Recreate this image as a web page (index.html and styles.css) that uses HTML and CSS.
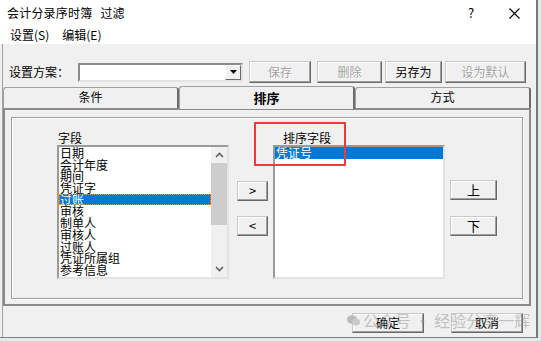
FILE: index.html
```html
<!doctype html>
<html>
  <head>
    <meta charset="utf-8">
    <title>会计分录序时簿 过滤</title>
    <link rel="stylesheet" href="styles.css">
  </head>
  <body>
    <div class="window">
      <div class="titlebar">
        <span class="title">会计分录序时簿<span class="sub">过滤</span></span>
        <span class="help">?</span>
        <span class="close">
          <svg width="11" height="11" viewBox="0 0 11 11"><path d="M0.5 0.5L10.5 10.5M10.5 0.5L0.5 10.5" stroke="#000" stroke-width="1.1" fill="none"/></svg>
        </span>
      </div>
      <div class="menubar">
        <span>设置(S)</span>
        <span>编辑(E)</span>
      </div>

      <div class="client">
        <div class="toolbar">
          <span class="scheme-label">设置方案：</span>
          <div class="combo">
            <div class="combo-btn">
              <svg width="7" height="4" viewBox="0 0 7 4"><path d="M0 0H7L3.5 4Z" fill="#000"/></svg>
            </div>
          </div>
          <button class="btn tb-save disabled">保存</button>
          <button class="btn tb-del disabled">删除</button>
          <button class="btn tb-saveas">另存为</button>
          <button class="btn tb-default disabled">设为默认</button>
        </div>

        <div class="tabs">
          <div class="tab">条件</div>
          <div class="tab active">排序</div>
          <div class="tab">方式</div>
        </div>

        <div class="panel">
          <div class="group">
            <div class="col">
              <div class="cap">字段</div>
              <div class="listbox">
                <ul class="items">
                  <li>日期</li>
                  <li>会计年度</li>
                  <li>期间</li>
                  <li>凭证字</li>
                  <li class="sel focus">过账</li>
                  <li>审核</li>
                  <li>制单人</li>
                  <li>审核人</li>
                  <li>过账人</li>
                  <li>凭证所属组</li>
                  <li>参考信息</li>
                </ul>
                <div class="scrollbar">
                  <div class="arrow">
                    <svg width="9" height="6" viewBox="0 0 9 6"><path d="M1 5L4.5 1.5L8 5" stroke="#606060" stroke-width="1.6" fill="none"/></svg>
                  </div>
                  <div class="track"><div class="thumb"></div></div>
                  <div class="arrow">
                    <svg width="9" height="6" viewBox="0 0 9 6"><path d="M1 1L4.5 4.5L8 1" stroke="#606060" stroke-width="1.6" fill="none"/></svg>
                  </div>
                </div>
              </div>
            </div>

            <div class="move-btns">
              <button class="btn">&gt;</button>
              <button class="btn">&lt;</button>
            </div>

            <div class="col sort-col">
              <div class="cap">排序字段</div>
              <div class="listbox">
                <ul class="items">
                  <li class="sel">凭证号</li>
                </ul>
              </div>
              <div class="mark"></div>
            </div>

            <div class="order-btns">
              <button class="btn">上</button>
              <button class="btn">下</button>
            </div>
          </div>
        </div>

        <div class="footer">
          <button class="btn">确定</button>
          <button class="btn">取消</button>
        </div>
      </div>

      <div class="watermark">
        <svg width="13" height="11" viewBox="0 0 13 11">
          <ellipse cx="5" cy="4.5" rx="5" ry="4.2" fill="#b9b9b9"/>
          <ellipse cx="9" cy="7" rx="4" ry="3.4" fill="#c9c9c9"/>
        </svg>
        <span>公众号 · 经验分享一辉</span>
      </div>
    </div>
  </body>
</html>
```

FILE: styles.css
```css
* {
  box-sizing: border-box;
}
body {
  margin: 0;
  background: #e6eae8;
  font-family: "Noto Sans CJK SC", sans-serif;
  font-size: 12px;
  line-height: 14px;
  color: #000;
}
ul {
  margin: 0;
  padding: 0;
  list-style: none;
}

.window {
  position: relative;
  width: 538px;
  height: 338px;
  display: flex;
  flex-direction: column;
  background: #f0f0f0;
  border-right: 2px solid #6f7e79;
  border-bottom: 1px solid #808080;
}

/* title + menu */
.titlebar {
  height: 26px;
  display: flex;
  align-items: center;
  padding-left: 7px;
  background: #fff;
}
.titlebar .title {
  flex: 1;
  letter-spacing: 0.2px;
}
.titlebar .sub {
  margin-left: 8px;
}
.titlebar .help {
  width: 41px;
  font-size: 13px;
}
.titlebar .close {
  width: 27px;
  display: flex;
}
.menubar {
  height: 18px;
  display: flex;
  align-items: center;
  gap: 13px;
  padding-left: 10px;
  background: #fff;
}

.client {
  flex: 1;
  display: flex;
  flex-direction: column;
  margin-left: 2px;
  border-left: 1px solid #a0a0a0;
}

/* buttons */
.btn {
  height: 20px;
  padding: 0;
  font-family: inherit;
  font-size: 12px;
  line-height: 14px;
  color: #000;
  background: #f0f0f0;
  border: 1px solid;
  border-color: #c8c8c8 #696969 #696969 #c8c8c8;
  box-shadow: inset -1px -1px #a0a0a0, inset 1px 1px #fff;
}
.btn.disabled {
  color: #a3a3a3;
  text-shadow: 1px 1px #fff;
}

/* toolbar */
.toolbar {
  display: flex;
  align-items: center;
  height: 22px;
  margin-top: 17px;
  margin-bottom: 4px;
  padding-left: 6px;
}
.toolbar .btn {
  height: 22px;
}
.scheme-label {
  width: 69px;
}
.combo {
  width: 165px;
  height: 19px;
  display: flex;
  justify-content: flex-end;
  background: #fff;
  border: 2px solid;
  border-color: #8a8a8a #e3e3e3 #e3e3e3 #8a8a8a;
}
.combo-btn {
  width: 16px;
  display: flex;
  align-items: center;
  justify-content: center;
  background: #f0f0f0;
  border: 1px solid;
  border-color: #fff #696969 #696969 #fff;
}
.tb-save {
  width: 62px;
  margin-left: 6px;
}
.tb-del {
  width: 65px;
  margin-left: 6px;
}
.tb-saveas {
  width: 57px;
  margin-left: 3px;
}
.tb-default {
  width: 81px;
  margin-left: 3px;
}

/* tabs */
.tabs {
  display: flex;
  width: 528px;
  height: 21px;
}
.tab {
  width: 176px;
  height: 21px;
  text-align: center;
  line-height: 18px;
  border-top: 1px solid #a0a0a0;
  border-left: 1px solid #a0a0a0;
  border-right: 2px solid #6d6d6d;
  border-radius: 3px 3px 0 0;
}
.tab.active {
  position: relative;
  z-index: 1;
  height: 23px;
  margin-top: -1px;
  font-size: 13px;
  font-weight: bold;
  line-height: 21px;
  background: #f0f0f0;
}

/* tab page */
.panel {
  width: 528px;
  height: 198px;
  display: flex;
  padding: 7px 6px 5px 6px;
  border: 2px solid #8a8a8a;
}
.group {
  flex: 1;
  display: flex;
  align-items: flex-start;
  padding: 13px 0 0 45px;
  border: 1px solid #a0a0a0;
  box-shadow: inset 1px 1px #fff, 1px 1px #fff;
}
.col {
  width: 172px;
}
.cap {
  height: 14px;
  padding-left: 1px;
}
.sort-col {
  position: relative;
  margin-left: 5px;
}
.sort-col .cap {
  padding-left: 10px;
}
.listbox {
  height: 134px;
  display: flex;
  overflow: hidden;
  background: #fff;
  border: 2px solid;
  border-color: #9a9a9a #e3e3e3 #e3e3e3 #9a9a9a;
}
.items {
  flex: 1;
  font-size: 12px;
  line-height: 11.7px;
}
.items li {
  height: 11.7px;
  padding-left: 1px;
  white-space: nowrap;
}
.items li.sel {
  color: #fff;
  background: #0078d7;
}
.items li.focus {
  outline: 1px dotted #f0a040;
  outline-offset: -1px;
}
.scrollbar {
  width: 16px;
  display: flex;
  flex-direction: column;
  background: #f0f0f0;
}
.scrollbar .arrow {
  height: 16px;
  display: flex;
  align-items: center;
  justify-content: center;
}
.scrollbar .track {
  flex: 1;
}
.scrollbar .thumb {
  height: 62px;
  background: #cdcdcd;
}

.move-btns,
.order-btns {
  display: flex;
  flex-direction: column;
  gap: 15px;
  margin-top: 50px;
}
.move-btns {
  width: 31px;
  margin-left: 8px;
}
.order-btns {
  width: 47px;
  margin-left: 5px;
  margin-top: 49px;
  gap: 16px;
}
.move-btns .btn,
.order-btns .btn {
  height: 20px;
  font-size: 13px;
}

/* red highlight drawn on the screenshot */
.mark {
  position: absolute;
  left: -19px;
  top: -9px;
  width: 92px;
  height: 44px;
  border: 2px solid #ef3b3b;
}

/* bottom buttons */
.footer {
  display: flex;
  justify-content: flex-end;
  gap: 27px;
  padding: 7px 13px 0 0;
}
.footer .btn {
  width: 72px;
  height: 20px;
}

.watermark {
  position: absolute;
  left: 347px;
  top: 311px;
  display: flex;
  align-items: center;
  gap: 3px;
  font-size: 16px;
  line-height: 18px;
  color: rgba(150, 150, 150, 0.55);
  white-space: nowrap;
}
```
